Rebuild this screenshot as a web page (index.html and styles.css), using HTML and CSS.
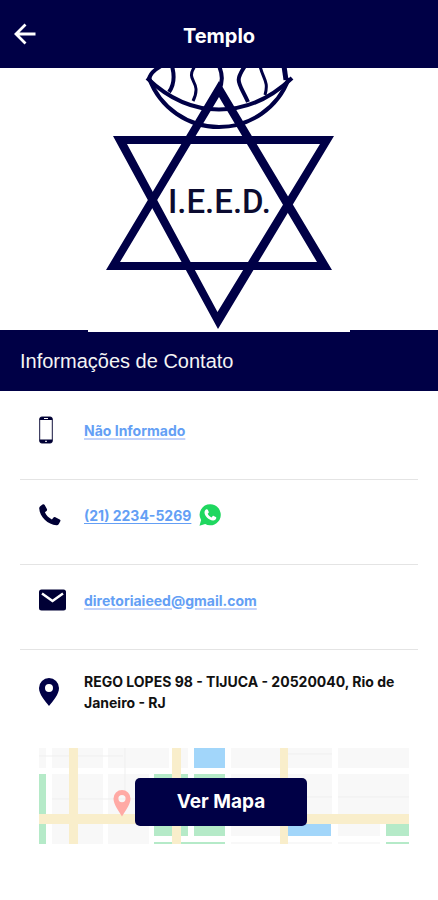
FILE: index.html
```html
<!DOCTYPE html>
<html lang="pt-BR">
<head>
    <meta charset="UTF-8">
    <meta name="viewport" content="width=device-width, initial-scale=1.0">
    <title>Templo</title>
    <link rel="stylesheet" href="styles.css">
</head>
<body>

    <header class="topbar">
        <button class="back" type="button" aria-label="Voltar">
            <svg width="22" height="22" viewBox="0 0 22 22" fill="none" stroke="#fff" stroke-width="2.800">
                <path d="M21.500 11H2.500M11.500 1.500L2 11l9.500 9.500"/>
            </svg>
        </button>
        <h1>Templo</h1>
    </header>

    <main>
        <div class="hero">
            <svg class="logo" viewBox="88 68 262 264" width="262" height="264" role="img" aria-label="I.E.E.D.">
                <rect x="88" y="68" width="262" height="264" fill="#fff"/>
                <!-- bowl and flames -->
                <g fill="none" stroke="#000046" stroke-width="4">
                    <path d="M147 78C171 101 196 109.500 219 109.500S268 101 292 78"/>
                    <path d="M149 78C160 108 188 127 219 127S278 108 289 78"/>
                    <path d="M161 66C154 70 150 74 149 79"/>
                    <path d="M172 66C175 77 174 85 169 92"/>
                    <path d="M195 66C184 82 203 80 193 101" stroke-width="3"/>
                    <path d="M219 66C223 75 223 82 219 90"/>
                    <path d="M245 66C234 82 239 82 248 102"/>
                    <path d="M260 66C263 79 269 81 265 95" stroke-width="3"/>
                    <path d="M284 66L286 80" stroke-width="5"/>
                </g>
                <!-- star -->
                <g fill="#000046" fill-rule="evenodd">
                    <path d="M219 81L332 270H106zM219 97L120 262H317z"/>
                    <path d="M113 136H334L218 329zM127 144L217.500 312L320 144z"/>
                </g>
                <text class="logo-text" x="219.500" y="213" text-anchor="middle">I.E.E.D.</text>
            </svg>
        </div>

        <h2 class="section-title">Informações de Contato</h2>

        <ul class="contacts">
            <li>
                <span class="icon">
                    <svg width="14" height="28" viewBox="0 0 14 28">
                        <rect x="0.700" y="1" width="12.600" height="26" rx="2" fill="#fff" stroke="#15153f"/>
                        <path d="M.7 4V3a2 2 0 0 1 2-2h8.600a2 2 0 0 1 2 2v1zM.7 23.500h12.600V25a2 2 0 0 1-2 2H2.700a2 2 0 0 1-2-2z" fill="#000035"/>
                        <path d="M5 2.500h4M6 25.300h2" stroke="#fff"/>
                    </svg>
                </span>
                <a class="soft" href="#">Não Informado</a>
            </li>
            <li>
                <span class="icon">
                    <svg width="22" height="22" viewBox="0 0 22 22" fill="#000035">
                        <path d="M1.200 2.200L3.500.6C4.300 0 5.200.2 5.700 1l2.200 3.900c.4.800.2 1.500-.4 2L5.900 8.300c1.300 3.100 3.900 5.700 7 7.100l1.600-1.900c.5-.6 1.200-.7 1.900-.3l4.300 2.200c.8.500 1 1.200.6 1.900l-1.500 2.700c-.5.900-1.300 1.300-2.300 1.200C9 21 .6 12.800.2 4.300c0-.9.300-1.600 1-2.100z"/>
                    </svg>
                </span>
                <a href="tel:+552122345269">(21) 2234-5269</a>
                <a class="whatsapp" href="#" aria-label="WhatsApp">
                    <svg width="22" height="22" viewBox="0 0 22 22">
                        <path d="M11.200.3A10.500 10.500 0 1 1 6.200 20L.5 21.700l1.600-5.600A10.500 10.500 0 0 1 11.200.3z" fill="#1fd75f"/>
                        <path d="M7.300 5.300c.6-.3 1.200-.2 1.500.4l.9 2c.2.500.1.900-.2 1.200l-.8.900c.9 1.700 2.200 2.900 3.900 3.600l1.100-1.300c.3-.3.600-.4 1-.2l2.100 1c.5.300.6.600.5 1.100-.3 1.700-1.700 2.600-3.400 2.400-4.300-.6-8.200-4.200-8.400-8 0-1.300.8-2.600 1.800-3.100z" fill="#fff"/>
                    </svg>
                </a>
            </li>
            <li>
                <span class="icon">
                    <svg width="27" height="22" viewBox="0 0 27 22">
                        <rect x="0" y="0.500" width="27" height="21" rx="2.500" fill="#000035"/>
                        <path d="M3 4.500l10.500 7.500L24 4.500" fill="none" stroke="#fff" stroke-width="2.500"/>
                    </svg>
                </span>
                <a class="soft" href="mailto:diretoriaieed@gmail.com">diretoriaieed@gmail.com</a>
            </li>
            <li>
                <span class="icon">
                    <svg width="20" height="28" viewBox="0 0 20 28">
                        <path d="M10 0a10 10 0 0 1 10 10c0 6.500-6 13-10 18C6 23 0 16.500 0 10A10 10 0 0 1 10 0zm0 6a4 4 0 1 0 0 8 4 4 0 0 0 0-8z" fill="#000046" fill-rule="evenodd"/>
                    </svg>
                </span>
                <address>REGO LOPES 98 - TIJUCA - 20520040, Rio de Janeiro - RJ</address>
            </li>
        </ul>

        <div class="map">
            <svg class="map-art" viewBox="0 0 370 96" preserveAspectRatio="xMidYMid slice" aria-hidden="true">
                <rect width="370" height="96" fill="#fff"/>
                <!-- blocks -->
                <g fill="#f8f8f8">
                    <path d="M0 0h7v20H0zM13 0h51v20H13zM69 0h61v20H69zM134 0h15v20h-15zM192 0h49v20h-49zM249 0h44v20h-44zM299 0h71v20h-71z"/>
                    <path d="M13 26h51v40H13zM69 26h41v40H69zM192 26h49v40h-49zM249 26h44v40h-44zM299 26h71v40h-71z"/>
                    <path d="M13 76h51v20H13zM69 76h41v20H69zM192 76h49v12h-49zM299 76h42v12h-42zM192 94h49v2h-49zM249 94h44v2h-44zM299 94h42v2h-42z"/>
                </g>
                <path d="M0 8h84M13 51h97M86 0v42M249 6h44M249 49h44M299 49h71" fill="none" stroke="#efefef"/>
                <!-- parks -->
                <path d="M0 26h7v70H0zM115 26h34v62h-34zM155 26h31v62h-31zM115 94h71v2h-71zM347 76h23v12h-23zM347 94h23v2h-23z" fill="#b5eac8"/>
                <!-- water -->
                <path d="M155 0h31v20h-31zM249 76h43v12h-43z" fill="#a2d6fa"/>
                <!-- avenues -->
                <path d="M0 66h370v10H0zM30 0h9v96h-9zM133 0h9v96h-9zM241 0h8v96h-8z" fill="#f9eecb"/>
                <path d="M83 42a8.500 8.500 0 0 1 8.500 8.500c0 6-5 12-8.500 18-3.500-6-8.500-12-8.500-18A8.500 8.500 0 0 1 83 42zm0 5a3.600 3.600 0 1 0 0 7.200 3.600 3.600 0 0 0 0-7.200z" fill="#ffaaa5" fill-rule="evenodd"/>
            </svg>
            <button class="map-button" type="button">Ver Mapa</button>
        </div>
    </main>

</body>
</html>
```

FILE: styles.css
```css
* {
    box-sizing: border-box;
}

body {
    margin: 0;
    background-color: #fff;
    color: #111;
    font-family: Inter, Arial, sans-serif;
}

svg {
    display: block;
}

.topbar {
    display: grid;
    grid-template-columns: 50px 1fr 50px;
    align-items: center;
    height: 68px;
    padding-top: 4px;
    background-color: #000046;
    color: #fff;
}

.topbar h1 {
    margin: 0;
    font-size: 20px;
    font-weight: 700;
    text-align: center;
}

.back {
    padding: 0 0 4px 14px;
    border: none;
    background: none;
    cursor: pointer;
}

.hero {
    display: flex;
    justify-content: center;
}

.logo {
    position: relative;
    margin-bottom: -2px;
}

.logo-text {
    font-family: Roboto, sans-serif;
    font-size: 33px;
    font-weight: 500;
    fill: #0b0b30;
}

.section-title {
    margin: 0;
    padding: 17px 20px 15px;
    background-color: #000046;
    color: #f4f4f4;
    font-family: "Liberation Sans", Arial, sans-serif;
    font-size: 20px;
    font-weight: 400;
    line-height: 29px;
}

.contacts {
    margin: 0;
    padding: 4px 20px 0;
    list-style: none;
    font-size: 14px;
    font-weight: 700;
    line-height: 21px;
}

.contacts li {
    display: flex;
    align-items: center;
    padding: 21px 0 35px 19px;
    border-bottom: 1px solid #e4e4e4;
}

.contacts li:last-child {
    padding-right: 8px;
    border-bottom: none;
}

.icon {
    display: flex;
    flex: 0 0 45px;
    align-items: center;
    height: 28px;
}

.contacts a {
    color: #649ff5;
    text-underline-offset: 2px;
}

.contacts .soft {
    text-decoration-color: #c3d3fa;
    text-decoration-thickness: 2px;
}

.contacts .whatsapp {
    margin-left: 8px;
}

.contacts address {
    font-style: normal;
}

.map {
    display: grid;
    place-items: center;
    margin: 0 29px 0 39px;
}

.map-art,
.map-button {
    grid-area: 1 / 1;
}

.map-art {
    width: 100%;
    height: 96px;
}

.map-button {
    padding: 12px 42px;
    margin: 11px 6px 0 0;
    border: none;
    border-radius: 5px;
    background-color: #000046;
    color: #fff;
    font-family: inherit;
    font-size: 19px;
    font-weight: 700;
    line-height: 24px;
    cursor: pointer;
}
```
